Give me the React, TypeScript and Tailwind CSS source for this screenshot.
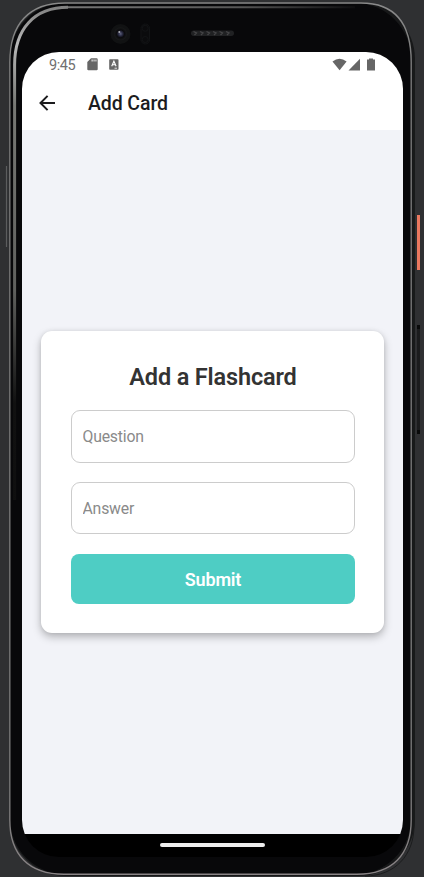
import React from "react";

function PhoneFrame() {
  return (
    <svg className="absolute inset-0" width="424" height="877" viewBox="0 0 424 877" fill="none">
      <defs>
        <linearGradient id="edge" x1="0" y1="0" x2="0" y2="877" gradientUnits="userSpaceOnUse">
          <stop offset="0" stopColor="#8b8b8b" />
          <stop offset="0.1" stopColor="#777" />
          <stop offset="0.9" stopColor="#777" />
          <stop offset="1" stopColor="#8a8486" />
        </linearGradient>
        <linearGradient id="left" x1="0" y1="0" x2="0" y2="877" gradientUnits="userSpaceOnUse">
          <stop offset="0" stopColor="#777" />
          <stop offset="0.05" stopColor="#b8b8b8" />
          <stop offset="0.12" stopColor="#777874" />
          <stop offset="0.33" stopColor="#60615e" />
          <stop offset="0.46" stopColor="#111" />
          <stop offset="1" stopColor="#0a0a0a" />
        </linearGradient>
        <linearGradient id="top" x1="60" y1="0" x2="365" y2="0" gradientUnits="userSpaceOnUse">
          <stop offset="0" stopColor="#777" />
          <stop offset="0.6" stopColor="#555" />
          <stop offset="1" stopColor="#08080a" />
        </linearGradient>
        <radialGradient id="lens">
          <stop offset="0" stopColor="#5d607c" />
          <stop offset="0.35" stopColor="#25263c" />
          <stop offset="0.6" stopColor="#0a0a0c" />
          <stop offset="1" stopColor="#18191a" />
        </radialGradient>
      </defs>
      <rect x="9" y="2" width="406" height="874" rx="57" fill="#171819" />
      <rect x="10" y="3" width="401" height="871.5" rx="56" fill="#08080a" />
      <path d="M9.8 820V62C9.8 24 29 3 65 3H361C397 3 411.2 26 411.2 62V820C411.2 855 392 874.3 357 874.3H64C29 874.3 9.8 855 9.8 820Z" stroke="url(#edge)" strokeWidth="1.4" />
      <path d="M14.6 500V65C14.6 29 34 7.3 68 7.3" stroke="url(#left)" strokeWidth="3" />
      <path d="M68 7.2H355" stroke="url(#top)" strokeWidth="2" />
      <path d="M6.5 166V247" stroke="#5c5d5e" strokeWidth="1.2" />
      <path d="M414 60V826C414 855 395 876 365 876" stroke="#1b1c1d" strokeWidth="1" />
      <rect x="417" y="215" width="3" height="55" fill="#ea785f" />
      <path d="M418.5 325V434" stroke="#1b1c1d" strokeWidth="3" />
      <path d="M417 325h3v4h-3zM417 430h3v4h-3z" fill="#090a0a" />
      <circle cx="120.5" cy="34" r="10" fill="#111213" />
      <circle cx="120.5" cy="33.8" r="6.5" fill="url(#lens)" />
      <circle cx="119.3" cy="32" r="1" fill="#aeb0b5" />
      <rect x="141" y="24" width="8.5" height="20" rx="4.2" fill="#0b0b0d" stroke="#121315" />
      <circle cx="145.2" cy="28.3" r="3" stroke="#121315" />
      <circle cx="145.2" cy="39.5" r="3" stroke="#121315" />
      <rect x="191" y="30.5" width="43" height="5.5" rx="2.7" fill="#202123" />
      <path d="M193.5 31.5l3 1.5-2 2M200 31.5l3 1.5-2 2M206.5 31.5l3 1.5-2 2M213 31.5l3 1.5-2 2M219.5 31.5l3 1.5-2 2M226 31.5l3 1.5-2 2" stroke="#454547" strokeWidth="1.3" />
    </svg>
  );
}

function StatusBar() {
  return (
    <div className="flex h-[25px] items-center pl-[27px] pr-[27px] text-[#666]">
      <span className="w-[28px] pt-[3px] text-[14.5px] leading-none tracking-[-0.4px] text-[#707070]">9:45</span>
      <svg className="ml-[9.5px] shrink-0" width="11" height="13" viewBox="0 0 11 13" fill="currentColor">
        <path fillRule="evenodd" d="M4 0.3H9.6Q10.7 0.3 10.7 1.4V11.2Q10.7 12.3 9.6 12.3H1.4Q0.3 12.3 0.3 11.2V4ZM4.6 1.5V3.5H5.6V1.5ZM6.6 1.5V3.5H7.5V1.5ZM8.5 1.5V3.5H9.4V1.5Z" />
      </svg>
      <svg className="ml-[11px] shrink-0" width="10" height="11" viewBox="0 0 10 11">
        <rect x="0.2" y="0.3" width="9.3" height="10.4" rx="0.8" fill="#666" />
        <path d="M2.7 7.2L4.9 2.2L7.1 7.2M3.5 5.7H6.3" stroke="#fff" strokeWidth="1.1" fill="none" />
        <path d="M5.5 9.2H8" stroke="#fff" strokeWidth="0.8" />
      </svg>
      <svg className="ml-auto" width="44" height="13" viewBox="0 0 44 13" fill="currentColor">
        <path d="M0.5 3.5Q7.5 -2.2 14.6 3.5L7.6 12.3Z" />
        <path d="M28 0.8V12.4H16.5Z" />
        <path d="M35 1.6H37V0.4H41V1.6H43V12.4H35Z" />
      </svg>
    </div>
  );
}

function Header() {
  return (
    <header className="flex h-[53px] items-center pl-[17px]">
      <svg width="17" height="16" viewBox="0 0 17 16" fill="none" stroke="#1c1c1e" strokeWidth="2" className="mb-[2px]">
        <path d="M16 8H1.8M8.6 0.9L1.5 8L8.6 15.1" />
      </svg>
      <h1 className="ml-[32px] pt-px text-[19.5px] font-medium leading-none tracking-[-0.1px] text-[#1c1c1e]">Add Card</h1>
    </header>
  );
}

const inputStyle =
  "block w-full rounded-[9px] border border-[#ccc] bg-white px-[10.5px] text-[15.8px] tracking-[-0.2px] text-[#333] outline-none placeholder:text-[#8a8a8a]";

export default function App() {
  return (
    <div className="relative h-[877px] w-[424px] overflow-hidden bg-[#2f3032] font-['Roboto',sans-serif]">
      <PhoneFrame />
      <div className="relative pl-[22px] pt-[52px]">
        <div className="flex h-[805px] w-[381px] flex-col overflow-hidden rounded-[37px] bg-black">
          <div className="h-[78px] bg-white">
            <StatusBar />
            <Header />
          </div>
          <main className="h-[704px] bg-[#f2f3f8] px-[19px] pt-[201px]">
            <form
              className="h-[302px] w-[343px] rounded-[11px] bg-white pl-[30px] pr-[29px] pt-[33px] shadow-[0_4px_9px_rgba(0,0,0,0.26),0_0_4px_rgba(0,0,0,0.08)]"
              onSubmit={(e: React.FormEvent) => e.preventDefault()}
            >
              <h2 className="mb-[19px] text-center text-[23.5px] font-semibold leading-[27px] tracking-[-0.15px] text-[#333]">Add a Flashcard</h2>
              <input className={inputStyle + " mb-[19px] h-[53px]"} placeholder="Question" />
              <input className={inputStyle + " mb-[20px] h-[52px] pt-px"} placeholder="Answer" />
              <button className="block h-[50px] w-full rounded-[8px] bg-[#4ecdc4] pt-px text-[18px] font-semibold tracking-[-0.2px] text-white">
                Submit
              </button>
            </form>
          </main>
          <div className="flex h-[23px] justify-center pt-[9px]">
            <div className="h-[4px] w-[105px] rounded-full bg-[#eee]" />
          </div>
        </div>
      </div>
    </div>
  );
}
